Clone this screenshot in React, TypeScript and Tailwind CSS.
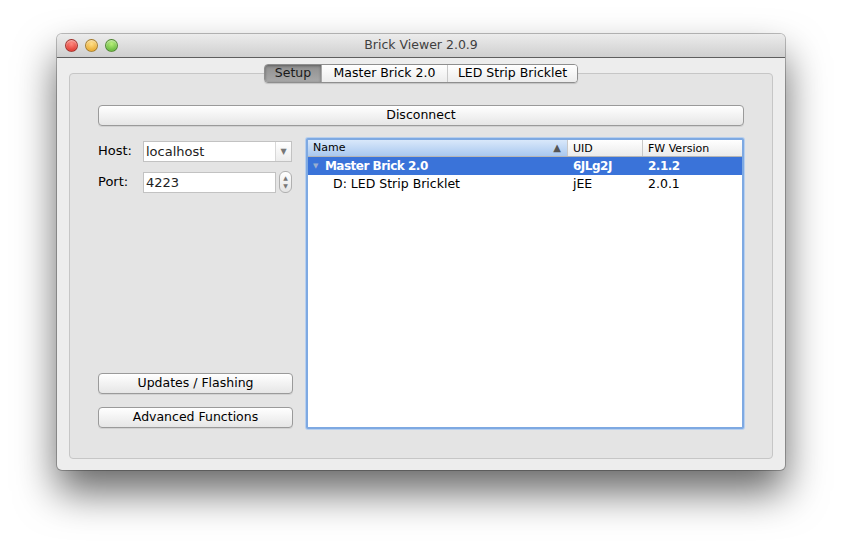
const FONT = "font-['DejaVu_Sans','Liberation_Sans',sans-serif]";

function TrafficLight({ from, to }: { from: string; to: string }) {
  return (
    <div
      className="h-[13px] w-[13px] rounded-full border border-black/30 shadow-[inset_0_1px_2px_rgba(255,255,255,0.6)]"
      style={{ background: `radial-gradient(circle at 50% 35%, ${from}, ${to})` }}
    />
  );
}

function MacButton({ label, className = "" }: { label: string; className?: string }) {
  return (
    <button
      type="button"
      className={`h-[21px] rounded-[4px] border border-[#9a9a9a] bg-gradient-to-b from-white to-[#e6e6e6] text-[12.5px] leading-none text-black shadow-[0_1px_0_rgba(0,0,0,0.08)] ${className}`}
    >
      {label}
    </button>
  );
}

const ROWS = [
  { name: "Master Brick 2.0", uid: "6JLg2J", fw: "2.1.2", selected: true, indent: false },
  { name: "D: LED Strip Bricklet", uid: "jEE", fw: "2.0.1", selected: false, indent: true },
];

export default function App() {
  return (
    <div className={`h-[549px] w-[842px] overflow-hidden bg-white pl-[57px] pt-[34px] ${FONT}`}>
      {/* Window */}
      <div className="flex h-[436px] w-[728px] flex-col rounded-[5px] bg-[#ededed] shadow-[0_22px_40px_rgba(0,0,0,0.6),0_0_0_1px_rgba(0,0,0,0.25)]">
        {/* Title bar */}
        <div className="relative flex h-[24px] items-center rounded-t-[5px] border-b border-[#5e5e5e] bg-gradient-to-b from-[#ececec] to-[#cfcfcf] px-[8px]">
          <div className="flex gap-[7px]">
            <TrafficLight from="#ff8a80" to="#d8221a" />
            <TrafficLight from="#ffe08a" to="#e29a14" />
            <TrafficLight from="#b8f07a" to="#4ea82a" />
          </div>
          <div className="absolute inset-x-0 text-center text-[12.5px] text-[#3f3f3f]">Brick Viewer 2.0.9</div>
        </div>

        {/* Content */}
        <div className="flex flex-1 flex-col px-[12px] pt-[6px]">
          {/* Tabs */}
          <div className="relative z-10 flex justify-center">
            <div className="flex h-[19px] overflow-hidden rounded-[4px] border border-[#8e8e8e] text-[12.5px] leading-none shadow-[0_1px_1px_rgba(0,0,0,0.15)]">
              <div className="flex w-[56px] items-center justify-center bg-gradient-to-b from-[#8f8f8f] to-[#a9a9a9] text-[#1a1a1a] shadow-[inset_0_1px_3px_rgba(0,0,0,0.35)]">
                Setup
              </div>
              <div className="flex w-[126px] items-center justify-center border-l border-[#a8a8a8] bg-gradient-to-b from-white to-[#ececec] text-black">
                Master Brick 2.0
              </div>
              <div className="flex w-[130px] items-center justify-center border-l border-[#c8c8c8] bg-gradient-to-b from-white to-[#ececec] text-black">
                LED Strip Bricklet
              </div>
            </div>
          </div>

          {/* Group box */}
          <div className="-mt-[10px] flex h-[386px] flex-col rounded-[4px] border border-[#c6c6c6] bg-[#e4e4e4] px-[28px] pb-[29px] pt-[31px]">
            <MacButton label="Disconnect" className="w-full" />

            <div className="mt-[12px] flex flex-1 gap-[13px]">
              {/* Left column */}
              <div className="flex w-[195px] flex-col pt-[3px]">
                <div className="flex items-center">
                  <span className="-mt-[2px] w-[45px] text-[13px] text-black">Host:</span>
                  <div className="flex h-[21px] w-[149px] border border-[#c2c2c2] bg-white">
                    <span className="flex-1 pl-[2px] text-[13px] leading-[19px] text-[#222]">localhost</span>
                    <span className="flex w-[16px] items-center justify-center border-l border-[#d8d8d8] bg-gradient-to-b from-white to-[#ececec] text-[8px] text-[#777]">
                      ▼
                    </span>
                  </div>
                </div>
                <div className="mt-[9px] flex items-center">
                  <span className="w-[45px] text-[13px] text-black">Port:</span>
                  <div className="h-[21px] w-[133px] border border-[#c2c2c2] bg-white pl-[2px] text-[13px] leading-[19px] text-[#222]">
                    4223
                  </div>
                  <div className="ml-[3px] flex h-[22px] w-[13px] flex-col items-center justify-center rounded-[6px] border border-[#b0b0b0] bg-gradient-to-b from-white to-[#e4e4e4] text-[6px] leading-[8px] text-[#777]">
                    <span>▲</span>
                    <span>▼</span>
                  </div>
                </div>

                <div className="flex-1" />
                <MacButton label="Updates / Flashing" className="w-full" />
                <MacButton label="Advanced Functions" className="mt-[13px] w-full" />
                <div className="h-[1px]" />
              </div>

              {/* Tree */}
              <div className="flex flex-1 flex-col rounded-[2px] border-[2px] border-[#7ea9e2] bg-white shadow-[0_0_0_1px_#b7cfee]">
                <div className="flex h-[17px] border-b border-[#b5b5b5] text-[11px] leading-[18px] text-black">
                  <div className="flex w-[259px] items-center justify-between bg-gradient-to-b from-[#d9e8fa] to-[#a9c8ef] pl-[5px] pr-[6px]">
                    <span>Name</span>
                    <span className="text-[10px] text-[#555]">▲</span>
                  </div>
                  <div className="w-[75px] border-l border-[#c8c8c8] bg-gradient-to-b from-white to-[#ebebeb] pl-[5px]">UID</div>
                  <div className="flex-1 border-l border-[#c8c8c8] bg-gradient-to-b from-white to-[#ebebeb] pl-[5px]">FW Version</div>
                </div>
                {ROWS.map((r) => (
                  <div
                    key={r.name}
                    className={`flex h-[18px] items-center ${r.selected ? "bg-[#3a73d9] text-[12px] font-bold tracking-[-0.5px] text-white" : "text-[12.5px] text-black"}`}
                  >
                    <div className={`flex w-[259px] items-center ${r.indent ? "pl-[25px]" : "pl-[5px]"}`}>
                      {!r.indent && <span className="mr-[7px] text-[7px] text-[#9aaed0]">▼</span>}
                      {r.name}
                    </div>
                    <div className="w-[75px] pl-[6px]">{r.uid}</div>
                    <div className="flex-1 pl-[6px]">{r.fw}</div>
                  </div>
                ))}
              </div>
            </div>
          </div>
        </div>
      </div>
    </div>
  );
}
